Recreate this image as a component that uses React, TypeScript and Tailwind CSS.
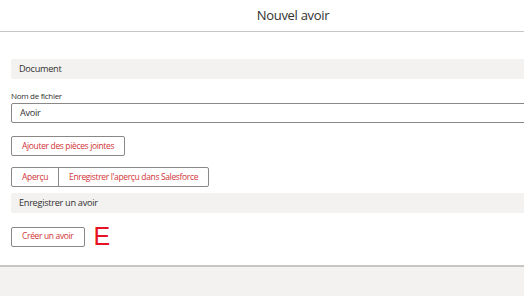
import React from 'react';

const font = { fontFamily: '"Open Sans", "Noto Sans", "Liberation Sans", sans-serif' };

const OutlineButton: React.FC<{ label: string; className?: string }> = ({ label, className = '' }) => (
  <button
    className={`flex items-center h-[20px] px-[10px] bg-white border border-[#8a8886] text-[#d13438] text-[8.5px] tracking-[-0.35px] leading-none whitespace-nowrap ${className}`}
  >
    {label}
  </button>
);

const SectionBar: React.FC<{ title: string }> = ({ title }) => (
  <div className="h-[20px] bg-[#f3f2f1] rounded-l-[2px] flex items-center pl-[8px] text-[9.2px] tracking-[-0.3px] text-[#323130]">
    {title}
  </div>
);

export default function App() {
  return (
    <div className="w-[524px] h-[296px] overflow-hidden bg-white" style={font}>
      <div className="w-[586px] h-full flex flex-col">
        <div className="h-[32px] shrink-0 border-b border-[#c8c6c4] flex items-center justify-center text-[13px] tracking-[-0.3px] text-[#323130]">
          Nouvel avoir
        </div>

        <div className="flex-1 pl-[11px] pt-[27px]">
          <SectionBar title="Document" />

          <div className="mt-[13px] text-[8px] tracking-[-0.3px] text-[#323130] leading-none">Nom de fichier</div>
          <div className="mt-[3px] h-[20px] border border-[#8a8886] rounded-l-[2px] flex items-center pl-[8px] text-[9.2px] tracking-[-0.3px] text-[#323130]">
            Avoir
          </div>

          <OutlineButton label="Ajouter des pièces jointes" className="mt-[13px] rounded-[2px]" />

          <div className="mt-[11px] flex">
            <OutlineButton label="Aperçu" className="rounded-l-[2px]" />
            <OutlineButton label="Enregistrer l'aperçu dans Salesforce" className="-ml-px rounded-r-[2px]" />
          </div>

          <div className="mt-[6px]">
            <SectionBar title="Enregistrer un avoir" />
          </div>

          <div className="mt-[11px] flex items-center gap-[9px]">
            <OutlineButton label="Créer un avoir" className="rounded-[2px]" />
            <span className="text-[#e81123] text-[25px] leading-none" style={{ fontFamily: '"Liberation Sans", sans-serif' }}>
              E
            </span>
          </div>
        </div>

        <div className="h-[31px] shrink-0 border-t-2 border-[#c8c6c4] bg-[#f3f2f1]" />
      </div>
    </div>
  );
}
